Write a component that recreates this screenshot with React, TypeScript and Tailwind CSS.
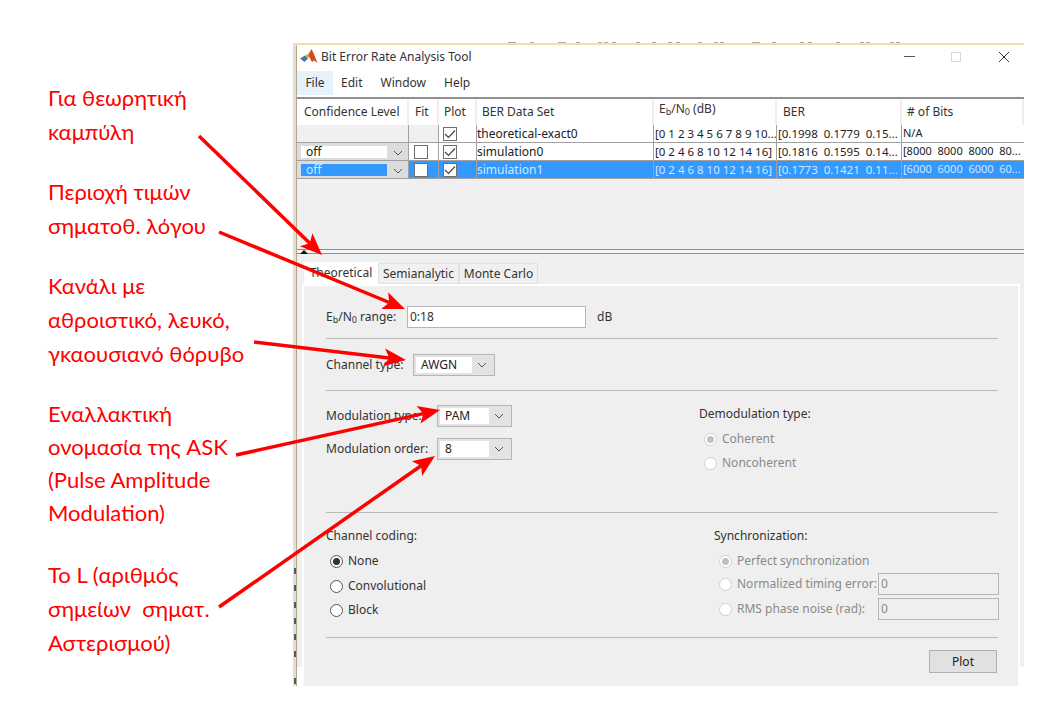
import { ReactNode } from "react";

const arrows = [
  { x1: 199, y1: 136, x2: 322, y2: 255 },
  { x1: 219, y1: 232, x2: 405, y2: 309 },
  { x1: 254, y1: 342, x2: 406, y2: 360 },
  { x1: 236, y1: 455, x2: 440, y2: 410 },
  { x1: 219, y1: 607, x2: 435, y2: 456 },
];

const notes = [
  { lines: ["Για θεωρητική", "καμπύλη"], cls: "" },
  { lines: ["Περιοχή τιμών", "σηματοθ. λόγου"], cls: "mt-[26px]" },
  { lines: ["Κανάλι με", "αθροιστικό, λευκό,", "γκαουσιανό θόρυβο"], cls: "mt-[26px]" },
  { lines: ["Εναλλακτική", "ονομασία της ASK", "(Pulse Amplitude", "Modulation)"], cls: "mt-[26px] leading-[33px]" },
  { lines: ["Το L (αριθμός", "σημείων  σηματ.", "Αστερισμού)"], cls: "mt-[29px]" },
];

// bits of the window behind that show along the top and left edges
const topMarks = [508, 512, 530, 558, 562, 576, 598, 604, 612, 636, 652, 668, 676, 698, 714, 720, 752, 756, 772, 800, 808, 836, 860, 866, 890, 896];
const leftMarks = [568, 585, 602, 618, 634, 651, 678];

function Chevron() {
  return (
    <svg width="10" height="6" viewBox="0 0 10 6" className="text-[#555]">
      <path d="M1 1l4 4 4-4" fill="none" stroke="currentColor" strokeWidth="1" />
    </svg>
  );
}

function Check({ on }: { on?: boolean }) {
  return (
    <span className="flex h-[14px] w-[14px] items-center justify-center border border-[#707070] bg-white">
      {on && (
        <svg width="12" height="10" viewBox="0 0 12 10">
          <path d="M1 5l3.5 3.5L11 1.5" fill="none" stroke="#444" strokeWidth="1.2" />
        </svg>
      )}
    </span>
  );
}

function Radio({ on, off }: { on?: boolean; off?: boolean }) {
  return (
    <span
      className={`flex h-[13px] w-[13px] shrink-0 items-center justify-center rounded-full border bg-white ${
        off ? "border-[#d0d0d0]" : "border-[#555]"
      }`}
    >
      {on && <span className={`h-[7px] w-[7px] rounded-full ${off ? "bg-[#c0c0c0]" : "bg-[#333]"}`} />}
    </span>
  );
}

function Select({ value, w }: { value: string; w: string }) {
  return (
    <div className={`flex h-[22px] items-center border border-[#b5b5b5] bg-[#e3e3e3] p-[2px] ${w}`}>
      <span className="flex h-full flex-1 items-center bg-white pl-[5px] text-[12px] text-[#222]">{value}</span>
      <span className="flex w-[20px] justify-center">
        <Chevron />
      </span>
    </div>
  );
}

function Hr({ className = "" }: { className?: string }) {
  return <div className={`h-px w-[672px] bg-[#b9b9b9] ${className}`} />;
}

function Head({ children, className = "" }: { children: ReactNode; className?: string }) {
  return (
    <div className={`flex h-[26px] items-center border-r-2 border-[#eeeeee] bg-white text-[12px] text-[#333] ${className}`}>
      {children}
    </div>
  );
}

function Cell({ children, sel, className = "" }: { children?: ReactNode; sel?: boolean; className?: string }) {
  return (
    <div
      className={`flex h-[18px] items-center overflow-hidden whitespace-pre border-r border-b border-[#a0a0a0] ${
        sel ? "bg-[#3399ff] text-[#cfe6ff]" : "bg-white text-[#222]"
      } ${className}`}
    >
      {children}
    </div>
  );
}

function ConfCell({ sel }: { sel?: boolean }) {
  return (
    <div className="flex h-[18px] items-center border-r border-b border-[#a0a0a0] bg-[#dcdcdc] pl-[4px] text-[12px]">
      <span className={`flex h-[12px] w-[86px] items-center pl-[5px] ${sel ? "bg-[#3399ff] text-[#cfe6ff]" : "bg-white text-[#222]"}`}>
        off
      </span>
      <span className="flex flex-1 justify-center pt-[3px]">
        <Chevron />
      </span>
    </div>
  );
}

function SimRow({ name, ber, bits, sel }: { name: string; ber: string; bits: string; sel?: boolean }) {
  return (
    <>
      <ConfCell sel={sel} />
      <Cell sel={sel} className="pl-[5px]"><Check /></Cell>
      <Cell sel={sel} className="pl-[4px]"><Check on /></Cell>
      <Cell sel={sel} className="text-[12px]">{name}</Cell>
      <Cell sel={sel} className="pl-[1px] text-[11.5px]">[0 2 4 6 8 10 12 14 16]</Cell>
      <Cell sel={sel} className="pl-[1px] text-[11.5px]">{ber}</Cell>
      <Cell sel={sel} className="border-r-0 pl-[1px] text-[11px]">{bits}</Cell>
    </>
  );
}

function BerTable() {
  return (
    <div className="mt-px grid grid-cols-[112px_30px_38px_177px_123px_125px_122px] border-t-2 border-[#8f8f8f]">
      <Head className="pl-[7px]">Confidence Level</Head>
      <Head className="pl-[6px]">Fit</Head>
      <Head className="pl-[5px]">Plot</Head>
      <Head className="pl-[5px]">BER Data Set</Head>
      <Head className="items-start pl-[5px] pt-[1px]">
        <span>E<sub>b</sub>/N<sub>0</sub> (dB)</span>
      </Head>
      <Head className="pl-[6px]">BER</Head>
      <Head className="border-r-0 pl-[5px]"># of Bits</Head>

      <div className="h-[18px] border-r border-b border-[#a0a0a0] bg-[#f0f0f0]" />
      <div className="h-[18px] border-r border-b border-[#a0a0a0] bg-[#f0f0f0]" />
      <Cell className="pl-[4px]"><Check on /></Cell>
      <Cell className="text-[12px]">theoretical-exact0</Cell>
      <Cell className="pl-[1px] text-[11.5px]">[0 1 2 3 4 5 6 7 8 9 10...</Cell>
      <Cell className="pl-[1px] text-[11.5px]">[0.1998  0.1779  0.15...</Cell>
      <Cell className="border-r-0 pl-[1px] text-[11px]">N/A</Cell>

      <SimRow name="simulation0" ber="[0.1816  0.1595  0.14..." bits="[8000  8000  8000  80..." />
      <SimRow name="simulation1" ber="[0.1773  0.1421  0.11..." bits="[6000  6000  6000  60..." sel />
    </div>
  );
}

function Tabs() {
  return (
    <div className="ml-[7px] mt-[8px] flex h-[22px] items-end text-[12px] text-[#333]">
      <span className="flex h-[22px] w-[74px] items-center justify-center bg-white">Theoretical</span>
      <span className="flex h-[21px] w-[81px] items-center justify-center border border-[#e2e2e2] bg-[#f0f0f0]">Semianalytic</span>
      <span className="flex h-[21px] w-[79px] items-center justify-center border border-[#e2e2e2] bg-[#f0f0f0]">Monte Carlo</span>
    </div>
  );
}

function Panel() {
  return (
    <div className="ml-[5px] h-[402px] w-[718px] border-t-2 border-l-2 border-r-2 border-white bg-[#efefef] pl-[22px] text-[12px] text-[#333]">
      <div className="mt-[20px] flex h-[22px] items-center">
        <span className="w-[81px]">E<sub>b</sub>/N<sub>0</sub> range:</span>
        <span className="flex h-[22px] w-[179px] items-center border border-[#b5b5b5] bg-white pl-[2px]">0:18</span>
        <span className="ml-[11px]">dB</span>
      </div>
      <Hr className="mt-[10px]" />
      <div className="mt-[15px] flex items-center">
        <span className="w-[87px]">Channel type:</span>
        <Select value="AWGN" w="w-[82px]" />
      </div>
      <Hr className="mt-[14px]" />

      <div className="flex h-[121px]">
        <div className="w-[373px] pt-[14px]">
          <div className="flex items-center">
            <span className="w-[111px]">Modulation type:</span>
            <Select value="PAM" w="w-[75px]" />
          </div>
          <div className="mt-[11px] flex items-center">
            <span className="w-[111px]">Modulation order:</span>
            <Select value="8" w="w-[75px]" />
          </div>
        </div>
        <div className="pt-[15px]">
          <div className="leading-[16px]">Demodulation type:</div>
          <div className="ml-[5px] mt-[9px] flex h-[16px] items-center gap-[5px] text-[#8a8a8a]">
            <Radio on off /> Coherent
          </div>
          <div className="ml-[5px] mt-[8px] flex h-[16px] items-center gap-[5px] text-[#8a8a8a]">
            <Radio off /> Noncoherent
          </div>
        </div>
      </div>

      <Hr />
      <div className="flex h-[124px]">
        <div className="w-[388px] pt-[15px]">
          <div className="leading-[16px]">Channel coding:</div>
          <div className="ml-[4px] mt-[9px] flex h-[16px] items-center gap-[5px]"><Radio on /> None</div>
          <div className="ml-[4px] mt-[9px] flex h-[16px] items-center gap-[5px]"><Radio /> Convolutional</div>
          <div className="ml-[4px] mt-[8px] flex h-[16px] items-center gap-[5px]"><Radio /> Block</div>
        </div>
        <div className="pt-[15px] text-[#8a8a8a]">
          <div className="leading-[16px] text-[#333]">Synchronization:</div>
          <div className="ml-[5px] mt-[9px] flex h-[16px] items-center gap-[5px]"><Radio on off /> Perfect synchronization</div>
          <div className="ml-[5px] mt-[4px] flex h-[22px] items-center">
            <Radio off />
            <span className="ml-[5px] w-[141px] whitespace-nowrap">Normalized timing error:</span>
            <span className="flex h-[22px] w-[121px] items-center border border-[#b5b5b5] pl-[2px]">0</span>
          </div>
          <div className="ml-[5px] mt-[3px] flex h-[22px] items-center">
            <Radio off />
            <span className="ml-[5px] w-[141px] whitespace-nowrap">RMS phase noise (rad):</span>
            <span className="flex h-[22px] w-[121px] items-center border border-[#b5b5b5] pl-[2px]">0</span>
          </div>
        </div>
      </div>
      <Hr />
      <div className="flex w-[671px] justify-end pt-[12px]">
        <button className="h-[23px] w-[68px] border border-[#b0b0b0] bg-[#e1e1e1] text-[12px] text-[#222]">Plot</button>
      </div>
    </div>
  );
}

function MatlabLogo() {
  return (
    <svg width="18" height="16" viewBox="0 0 18 16">
      <path d="M0 9.500l5-3 3 3-3.500 3.500z" fill="#3f78a8" />
      <path d="M5 6.500l3-1.500 3.500-5-2 7-1.500 2.500z" fill="#f0a030" />
      <path d="M11.500 0l2 4 4 10-3.500-2.500-2 1.500-3.500-6.500z" fill="#cf4f1c" />
    </svg>
  );
}

function Win() {
  return (
    <div className="mt-[43px] h-[643px] w-[731px] border-t-2 border-l-[3px] border-t-[#f3dfae] border-l-[#dedede] bg-white">
      <div className="h-full border-l border-[#b8a67c]">
        <div className="flex h-[25px] items-center pb-[2px] text-[12px] text-[#333]">
          <span className="ml-[3px]"><MatlabLogo /></span>
          <span className="ml-[3px] flex-1">Bit Error Rate Analysis Tool</span>
          <span className="h-px w-[11px] bg-[#555]" />
          <span className="ml-[36px] h-[10px] w-[10px] border border-[#d8d8d8]" />
          <svg width="12" height="12" viewBox="0 0 12 12" className="ml-[37px] mr-[14px]">
            <path d="M1 1l10 10M11 1L1 11" stroke="#333" strokeWidth="1" />
          </svg>
        </div>
        <div className="flex h-[26px] items-center text-[12px] text-[#333]">
          <span className="flex h-[24px] w-[36px] items-center justify-center bg-[#e5f1fb]">File</span>
          <span className="ml-[8px]">Edit</span>
          <span className="ml-[18px]">Window</span>
          <span className="ml-[18px]">Help</span>
        </div>
        <div className="h-[570px] bg-[#f0f0f0]">
          <BerTable />
          <div className="relative mt-[70px] h-[5px] border-y border-[#8f8f8f] bg-[#f6f6f6]">
            <svg width="8" height="4" viewBox="0 0 8 4" className="absolute left-[3px] top-0">
              <path d="M0 4l4-4 4 4z" fill="#111" />
            </svg>
          </div>
          <Tabs />
          <Panel />
        </div>
      </div>
    </div>
  );
}

export default function App() {
  return (
    <div className="relative flex h-[713px] w-[1057px] items-start overflow-hidden bg-white font-['Noto_Sans',sans-serif]">
      <div className="w-[293px] shrink-0 pl-[48px] pt-[81px] font-['Lato','Noto_Sans',sans-serif] text-[22px] leading-[34px] text-[#ff0000]">
        {notes.map((n) => (
          <div key={n.lines[0]} className={n.cls}>
            {n.lines.map((l) => (
              <div key={l} className="whitespace-pre">{l}</div>
            ))}
          </div>
        ))}
      </div>
      <Win />
      <svg className="pointer-events-none absolute left-0 top-0" width="1057" height="713">
        {topMarks.map((x) => (
          <rect key={x} x={x} y="42" width="4" height="1" fill="#b8a890" />
        ))}
        {leftMarks.map((y) => (
          <rect key={y} x="294" y={y} width="2" height="6" fill="#4a5a7a" />
        ))}
        {arrows.map((a) => {
          const ang = Math.atan2(a.y2 - a.y1, a.x2 - a.x1);
          const c = Math.cos(ang);
          const s = Math.sin(ang);
          const bx = a.x2 - 22 * c;
          const by = a.y2 - 22 * s;
          const mx = a.x2 - 17 * c;
          const my = a.y2 - 17 * s;
          return (
            <g key={a.x1 + "-" + a.y1}>
              <line x1={a.x1} y1={a.y1} x2={mx} y2={my} stroke="#ff0000" strokeWidth="3.5" />
              <polygon
                points={`${a.x2},${a.y2} ${bx + 9 * s},${by - 9 * c} ${mx},${my} ${bx - 9 * s},${by + 9 * c}`}
                fill="#ff0000"
              />
            </g>
          );
        })}
      </svg>
    </div>
  );
}
